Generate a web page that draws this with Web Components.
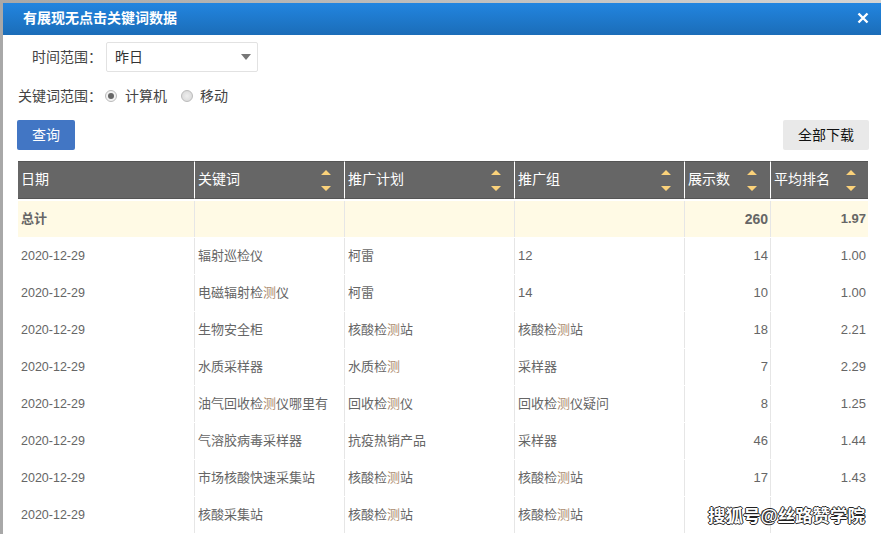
<!DOCTYPE html>
<html lang="zh"><head><meta charset="utf-8">
<style>
html,body{margin:0;padding:0;width:881px;height:534px;overflow:hidden;background:#fff}
body{font-family:"Liberation Sans","Noto Sans CJK SC",sans-serif}
</style></head><body>
<kw-page>
<kw-dialog heading="有展现无点击关键词数据">
  <kw-filters></kw-filters>
  <kw-actions></kw-actions>
  <kw-table></kw-table>
</kw-dialog>
</kw-page>
<script>
const FONT='"Liberation Sans","Noto Sans CJK SC",sans-serif';
class KwPage extends HTMLElement{constructor(){super();this.attachShadow({mode:'open'}).innerHTML=`<style>
:host{display:block;width:881px;height:534px;position:relative;overflow:hidden;background:linear-gradient(90deg,#a8a8a8,#d4d4d4);padding:3px 0 0 3px;box-sizing:border-box;font-family:${FONT}}
.mark{position:absolute;right:16px;bottom:8px;font-size:17.5px;line-height:20px;font-weight:700;color:#fff;text-shadow:-1px 0 #222,1px 0 #222,0 -1px #222,0 1px #222}
</style><slot></slot><span class="mark">搜狐号@丝路赞学院</span>`}}
class KwDialog extends HTMLElement{constructor(){super();this.attachShadow({mode:'open'}).innerHTML=`<style>
:host{display:block;height:531px;background:#fff;overflow:hidden}
header{height:32px;box-sizing:border-box;background:linear-gradient(180deg,#2285e0,#1b6db8);display:flex;align-items:center;justify-content:space-between;padding:0 12px 2px 20px;color:#fff;font-weight:700;font-size:14px;line-height:16px}
svg{display:block}
main{padding:7px 12px 0 14px}
</style><header><span id="t"></span><svg width="12" height="12" viewBox="0 0 12 12"><path d="M1.5 1.5 10.5 10.5M10.5 1.5 1.5 10.5" stroke="#fff" stroke-width="2.4"/></svg></header><main><slot></slot></main>`}
connectedCallback(){this.shadowRoot.getElementById('t').textContent=this.getAttribute('heading')}}
class KwFilters extends HTMLElement{constructor(){super();this.attachShadow({mode:'open'}).innerHTML=`<style>
:host{display:grid;grid-template-columns:85px 1fr;row-gap:16px;font-size:14px;line-height:16px;color:#444;align-items:center}
label{text-align:right;white-space:nowrap}
.sel{width:152px;height:30px;box-sizing:border-box;border:1px solid #e2e2e2;border-radius:2px;margin-left:4px;display:flex;align-items:center;justify-content:space-between;padding:0 6px 0 8px;color:#333}
.arrow{width:0;height:0;border:5.5px solid transparent;border-top:6px solid #777;border-bottom:0}
.radios{display:flex;align-items:center;margin-left:3px;height:16px}
.r{width:12px;height:12px;border-radius:50%;border:1px solid #bbb;background:radial-gradient(#eee,#d5d5d5);box-sizing:border-box;display:flex;align-items:center;justify-content:center;margin-right:8px}
.r.on{background:#f2f2f2}.r.on i{width:6px;height:6px;border-radius:50%;background:#666}
.radios span+.r{margin-left:14px;margin-right:7px}
</style><label>时间范围：</label><div class="sel"><span>昨日</span><i class="arrow"></i></div>
<label>关键词范围：</label><div class="radios"><i class="r on"><i></i></i><span>计算机</span><i class="r"></i><span>移动</span></div>`}}
class KwActions extends HTMLElement{constructor(){super();this.attachShadow({mode:'open'}).innerHTML=`<style>
:host{display:flex;justify-content:space-between;margin-top:16px;font-size:14px;line-height:16px}
div{height:30px;display:flex;align-items:center;justify-content:center;border-radius:2px}
.q{width:58px;background:#4276c4;color:#fff}.d{width:86px;background:#e9e9e9;color:#111}
</style><div class="q">查询</div><div class="d">全部下载</div>`}}
const rows=[["辐射巡检仪","柯雷","12",14,"1.00"],["电磁辐射检测仪","柯雷","14",10,"1.00"],["生物安全柜","核酸检测站","核酸检测站",18,"2.21"],["水质采样器","水质检测","采样器",7,"2.29"],["油气回收检测仪哪里有","回收检测仪","回收检测仪疑问",8,"1.25"],["气溶胶病毒采样器","抗疫热销产品","采样器",46,"1.44"],["市场核酸快速采集站","核酸检测站","核酸检测站",17,"1.43"],["核酸采集站","核酸检测站","核酸检测站",9,"1.65"]];
const hl=s=>s.replace(/测/g,'<b>测</b>');
class KwTable extends HTMLElement{constructor(){super();
const sort=`<svg width="10" height="21" viewBox="0 0 10 21"><path d="M0 5 5 0 10 5Z M0 16 10 16 5 21Z" fill="#fbd27a"/></svg>`;
const heads=["日期","关键词","推广计划","推广组","展示数","平均排名"];
let h=`<div class="row head">`+heads.map((t,i)=>`<div class="c"><span>${t}</span>${i?sort:''}</div>`).join('')+`</div>`;
let tot=`<div class="row total"><div class="c">总计</div><div class="c"></div><div class="c"></div><div class="c"></div><div class="c n big">260</div><div class="c n">1.97</div></div>`;
let b=rows.map(r=>`<div class="row body"><div class="c date">2020-12-29</div><div class="c">${hl(r[0])}</div><div class="c">${hl(r[1])}</div><div class="c">${hl(r[2])}</div><div class="c n">${r[3]}</div><div class="c n">${r[4]}</div></div>`).join('');
this.attachShadow({mode:'open'}).innerHTML=`<style>
:host{display:block;margin:11px 0 0 1px;width:850px;font-size:13px;line-height:16px;color:#666}
.row{display:grid;grid-template-columns:176px 150px 170px 170px 86px 98px}
.c{display:flex;align-items:center;box-sizing:border-box;padding:0 0 0 3px;white-space:nowrap;border-left:1px solid #e6e6e6;min-width:0}
.c:first-child{border-left:0}
.row.head{height:38px;margin-bottom:2px}
.head .c{background:#666;color:#fff;font-size:14px;justify-content:space-between;padding:0 13px 0 3px;border-left:1px solid #fff;border-top:1px solid #555;border-bottom:1px solid #555}
.head .c:last-child{padding-right:12px}
.head .c span{margin-bottom:2px}
.head .c:first-child{padding-left:3px;border-left:0}
.row.total{height:36px;margin-bottom:1px;background:#fffae5;font-weight:700}
.row.body{height:36px;margin-bottom:1px}
.date{font-size:12.5px}
.big{font-size:14px}
.n{justify-content:flex-end;padding:0 2px 0 0}
b{font-weight:400;color:#ab8a6c}
</style>${h}${tot}${b}`}}
customElements.define('kw-page',KwPage);customElements.define('kw-dialog',KwDialog);customElements.define('kw-filters',KwFilters);customElements.define('kw-actions',KwActions);customElements.define('kw-table',KwTable);
</script></body></html>
